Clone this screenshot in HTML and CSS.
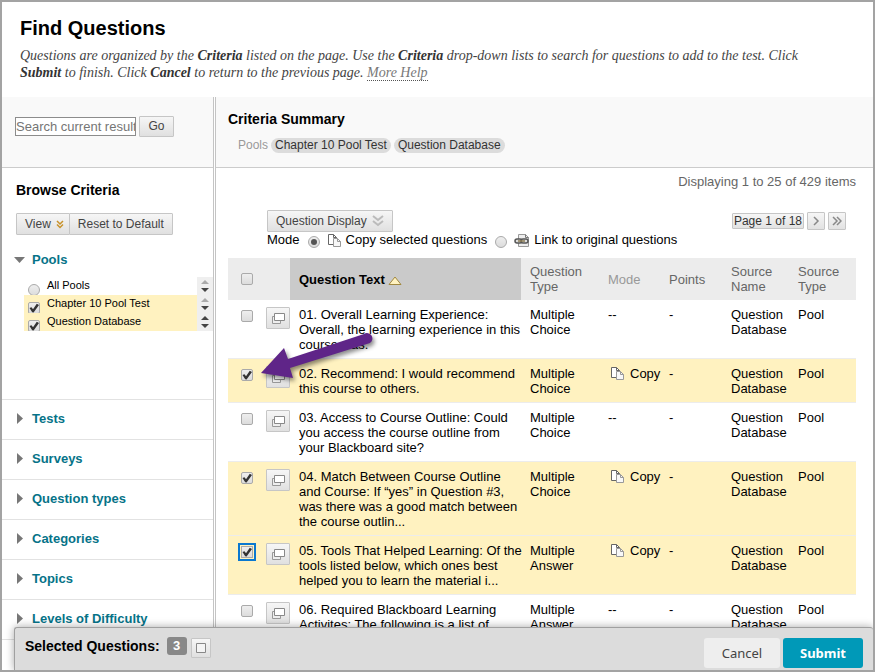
FILE: index.html
```html
<!DOCTYPE html>
<html lang="en">
<head>
<meta charset="utf-8">
<title>Find Questions</title>
<link rel="stylesheet" href="styles.css">
</head>
<body>
<svg class="defs" aria-hidden="true">
  <defs>
    <symbol id="copy" viewBox="0 0 15 15">
      <path d="M1.500 1.500h5l3 3v7h-8z" fill="#fff" stroke="#666"/>
      <path d="M6.500 1.500v3h3" fill="none" stroke="#666"/>
      <path d="M6.500 5.500h4l3 3v5h-7z" fill="#f8f8f8" stroke="#999"/>
      <path d="M10.500 5.500v3h3" fill="none" stroke="#999"/>
    </symbol>
    <symbol id="windows" viewBox="0 0 14 12">
      <path d="M1.500 4.500h8v7h-8z" fill="#eee" stroke="#999"/>
      <path d="M3.500 1.500h10v7h-10z" fill="#fff" stroke="#888"/>
    </symbol>
    <symbol id="sort" viewBox="0 0 8 12">
      <path d="M0 4l4-4 4 4z" fill="currentColor"/>
      <path d="M0 8h8l-4 4z" fill="#444"/>
    </symbol>
  </defs>
</svg>
<div class="page">
  <header class="intro">
    <h1>Find Questions</h1>
    <p>Questions are organized by the <b>Criteria</b> listed on the page. Use the <b>Criteria</b> drop-down lists to search for questions to add to the test. Click <b>Submit</b> to finish. Click <b>Cancel</b> to return to the previous page. <a href="#">More Help</a></p>
  </header>
  <div class="columns">
    <aside class="sidebar">
      <form class="strip search">
        <input type="text" aria-label="Search current results" placeholder="Search current result">
        <button type="button" class="btn">Go</button>
      </form>
      <section class="browse">
        <h2>Browse Criteria</h2>
        <div class="btn-group">
          <button type="button" class="btn menu">View <svg width="8" height="9" viewBox="0 0 8 9"><path d="M1 1l3 3 3-3M1 4.500l3 3 3-3" fill="none" stroke="#c8922a" stroke-width="1.500"/></svg></button><button type="button" class="btn">Reset to Default</button>
        </div>
        <h3 class="open"><a href="#">Pools</a></h3>
        <ul class="pools">
          <li><input type="radio" id="p0"><label for="p0">All Pools</label><span class="sorter dim"><svg width="8" height="12"><use href="#sort"/></svg></span></li>
          <li class="picked"><input type="checkbox" id="p1" checked><label for="p1">Chapter 10 Pool Test</label><span class="sorter dim"><svg width="8" height="12"><use href="#sort"/></svg></span></li>
          <li class="picked"><input type="checkbox" id="p2" checked><label for="p2">Question Database</label><span class="sorter"><svg width="8" height="12"><use href="#sort"/></svg></span></li>
        </ul>
      </section>
      <nav class="criteria">
        <a href="#">Tests</a>
        <a href="#">Surveys</a>
        <a href="#">Question types</a>
        <a href="#">Categories</a>
        <a href="#">Topics</a>
        <a href="#">Levels of Difficulty</a>
        <span></span>
      </nav>
    </aside>
    <main>
      <section class="strip summary">
        <h2>Criteria Summary</h2>
        <div class="tags"><span>Pools</span><span class="tag">Chapter 10 Pool Test</span><span class="tag">Question Database</span></div>
      </section>
      <section class="results">
        <p class="count">Displaying 1 to 25 of 429 items</p>
        <div class="tools">
          <button type="button" class="btn">Question Display <svg width="12" height="12" viewBox="0 0 12 12"><path d="M1 1l5 4 5-4M1 6l5 4 5-4" fill="none" stroke="#bbb" stroke-width="2"/></svg></button>
          <div class="pager">
            <button type="button" class="page-of">Page 1 of 18</button>
            <button type="button" class="step" aria-label="Next page"><svg width="10" height="10" viewBox="0 0 10 10"><path d="M3 1l4 4-4 4" fill="none" stroke="#888" stroke-width="1.500"/></svg></button>
            <button type="button" class="step" aria-label="Last page"><svg width="10" height="10" viewBox="0 0 10 10"><path d="M1 1l4 4-4 4M5 1l4 4-4 4" fill="none" stroke="#888" stroke-width="1.500"/></svg></button>
          </div>
        </div>
        <div class="mode">
          <span>Mode</span>
          <input type="radio" name="mode" id="m1" checked>
          <label for="m1"><svg width="15" height="15"><use href="#copy"/></svg>Copy selected questions</label>
          <input type="radio" name="mode" id="m2">
          <label for="m2"><svg width="16" height="15" viewBox="0 0 16 15"><path d="M4.500 1.500h7l3 3v9h-10z" fill="#eee" stroke="#999"/><path d="M11.500 1.500v3h3" fill="none" stroke="#777"/><rect x="1" y="6" width="7" height="4" rx="2" fill="#ddd" stroke="#555" stroke-width="1.500"/><rect x="7" y="6" width="7" height="4" rx="2" fill="#ddd" stroke="#555" stroke-width="1.500"/><path d="M4 8h7" stroke="#8a7a50" stroke-width="1.500"/></svg>Link to original questions</label>
        </div>
        <div class="list">
        <table>
          <colgroup><col class="c-check"><col class="c-view"><col><col class="c-type"><col class="c-mode"><col class="c-points"><col class="c-source"><col class="c-source"></colgroup>
          <thead>
            <tr><th class="check"><input type="checkbox" aria-label="Select all"></th><th></th><th class="sorted">Question Text <svg width="14" height="9" viewBox="0 0 14 9"><path d="M1 8.500L7 1l6 7.500z" fill="#fff2c0" stroke="#a08840"/></svg></th><th>Question Type</th><th class="faint">Mode</th><th>Points</th><th>Source Name</th><th>Source Type</th></tr>
          </thead>
          <tbody>
            <tr><td class="check"><input type="checkbox" aria-label="Question 01"></td><td class="view"><button type="button" class="btn" aria-label="Preview"><svg width="14" height="12"><use href="#windows"/></svg></button></td><td><div class="question">01. Overall Learning Experience: Overall, the learning experience in this course was.</div></td><td>Multiple Choice</td><td>--</td><td>-</td><td>Question Database</td><td>Pool</td></tr>
            <tr class="picked"><td class="check"><input type="checkbox" aria-label="Question 02" checked></td><td class="view"><button type="button" class="btn" aria-label="Preview"><svg width="14" height="12"><use href="#windows"/></svg></button></td><td><div class="question">02. Recommend: I would recommend this course to others.</div></td><td>Multiple Choice</td><td><span class="copy"><svg width="15" height="15"><use href="#copy"/></svg>Copy</span></td><td>-</td><td>Question Database</td><td>Pool</td></tr>
            <tr><td class="check"><input type="checkbox" aria-label="Question 03"></td><td class="view"><button type="button" class="btn" aria-label="Preview"><svg width="14" height="12"><use href="#windows"/></svg></button></td><td><div class="question">03. Access to Course Outline: Could you access the course outline from your Blackboard site?</div></td><td>Multiple Choice</td><td>--</td><td>-</td><td>Question Database</td><td>Pool</td></tr>
            <tr class="picked"><td class="check"><input type="checkbox" aria-label="Question 04" checked></td><td class="view"><button type="button" class="btn" aria-label="Preview"><svg width="14" height="12"><use href="#windows"/></svg></button></td><td><div class="question">04. Match Between Course Outline and Course: If “yes” in Question #3, was there was a good match between the course outlin...</div></td><td>Multiple Choice</td><td><span class="copy"><svg width="15" height="15"><use href="#copy"/></svg>Copy</span></td><td>-</td><td>Question Database</td><td>Pool</td></tr>
            <tr class="picked"><td class="check"><input type="checkbox" class="focused" aria-label="Question 05" checked></td><td class="view"><button type="button" class="btn" aria-label="Preview"><svg width="14" height="12"><use href="#windows"/></svg></button></td><td><div class="question">05. Tools That Helped Learning: Of the tools listed below, which ones best helped you to learn the material i...</div></td><td>Multiple Answer</td><td><span class="copy"><svg width="15" height="15"><use href="#copy"/></svg>Copy</span></td><td>-</td><td>Question Database</td><td>Pool</td></tr>
            <tr><td class="check"><input type="checkbox" aria-label="Question 06"></td><td class="view"><button type="button" class="btn" aria-label="Preview"><svg width="14" height="12"><use href="#windows"/></svg></button></td><td><div class="question">06. Required Blackboard Learning Activites: The following is a list of</div></td><td>Multiple Answer</td><td>--</td><td>-</td><td>Question Database</td><td>Pool</td></tr>
          </tbody>
        </table>
        <svg class="arrow" width="124" height="60" viewBox="0 0 124 60" aria-hidden="true"><path d="M3 45L26 20l4 11L106 6a5 5 0 0 1 6 9L32 40l3 10z" fill="#5f2588"/></svg>
        </div>
      </section>
    </main>
  </div>
  <footer class="bar">
    <strong>Selected Questions:</strong>
    <span class="badge">3</span>
    <button type="button" class="btn show" aria-label="Show selected"><svg width="10" height="10" viewBox="0 0 10 10"><path d="M.5.5h9v9h-9z" fill="#f4f4f4" stroke="#888"/></svg></button>
    <span class="actions"><button type="button" class="cancel">Cancel</button><button type="submit" class="submit">Submit</button></span>
  </footer>
</div>
</body>
</html>
```
FILE: styles.css
```css
* { box-sizing: border-box; }
body {
  margin: 0;
  font: 13px/15px "Liberation Sans", Arial, sans-serif;
  color: #000;
  background: #fff;
}
h1, h2, h3, p, ul { margin: 0; padding: 0; }
button, input { font: inherit; margin: 0; }
svg { flex: none; }
.defs { position: absolute; width: 0; height: 0; }
.page {
  position: relative;
  display: flex;
  flex-direction: column;
  height: 100vh;
  border: 2px solid #a3a3a3;
  overflow: hidden;
}

.intro { padding: 14px 44px 16px 18px; }
.intro h1 { font-size: 20px; line-height: 24px; margin-bottom: 7px; }
.intro p {
  font: italic 14px/17px "Liberation Serif", serif;
  color: #444;
}
.intro b { color: #333; }
.intro a { color: #777; text-decoration: none; border-bottom: 1px dotted #555; }

.columns {
  flex: 1;
  display: grid;
  grid-template-columns: 214px 1fr;
}
.sidebar { border-right: 3px double #c4c4c4; }
.strip { height: 71px; background: #f9f9f9; border-bottom: 1px solid #ccc; }
h2 { font-size: 14px; line-height: 16px; }

.btn {
  display: inline-flex;
  align-items: center;
  justify-content: center;
  gap: 5px;
  height: 22px;
  padding: 0 8px;
  border: 1px solid #c6c6c6;
  border-radius: 1px;
  background: linear-gradient(#f6f6f6, #e0e0e0);
  color: #444;
  font-size: 12px;
}
.search { display: flex; align-items: flex-start; gap: 3px; padding: 19px 0 0 13px; }
.search input {
  width: 121px;
  height: 19px;
  margin-top: 1px;
  padding: 0;
  border: 1px solid #8c8c8c;
  background: #fff;
}
.search input::placeholder { color: #757575; }
.search .btn { width: 35px; height: 21px; font-size: 12px; }

.browse { height: 231px; padding-top: 14px; }
.browse h2 { margin-left: 14px; }
.btn-group { display: flex; margin: 15px 0 0 14px; }
.btn-group .btn + .btn { margin-left: -1px; }
.btn-group .menu { padding-right: 5px; }
h3 { font-size: 13px; line-height: 16px; }
.open { display: flex; align-items: center; gap: 7px; margin: 17px 0 9px 12px; }
.open::before {
  content: "";
  width: 11px;
  height: 6px;
  background: #777;
  clip-path: polygon(0 0, 100% 0, 50% 100%);
}
.open a, .criteria a { color: #067388; text-decoration: none; }
.pools { list-style: none; margin-left: 22px; font-size: 11px; }
.pools li { display: flex; height: 18px; padding-left: 4px; overflow: hidden; }
.pools .picked { background: #fff2c0; }
.pools input { margin: 7px 7px 0 0; }
.pools label { flex: 1; line-height: 17px; }
.sorter { width: 16px; padding: 3px 4px; background: #efefef; line-height: 0; color: #444; }
.sorter.dim { color: #aaa; }

.criteria a, .criteria span {
  display: flex;
  align-items: center;
  gap: 9px;
  height: 40px;
  padding: 0 0 2px 15px;
  border-top: 1px solid #e2e2e2;
  font-weight: bold;
}
.criteria a::before {
  content: "";
  width: 6px;
  height: 11px;
  background: #777;
  clip-path: polygon(0 0, 100% 50%, 0 100%);
}

input[type="checkbox"], input[type="radio"] {
  appearance: none;
  flex: none;
  display: block;
  width: 12px;
  height: 12px;
  border: 1px solid #aaa;
  border-radius: 2px;
  background: linear-gradient(#eee, #dcdcdc);
}
input[type="radio"] { border-radius: 50%; }
input[type="checkbox"]:checked::before {
  content: "";
  display: block;
  width: 10px;
  height: 10px;
  background: #333;
  clip-path: polygon(5% 50%, 25% 42%, 40% 62%, 78% 8%, 100% 20%, 46% 95%, 32% 92%);
}
input[type="radio"]:checked::before {
  content: "";
  display: block;
  width: 6px;
  height: 6px;
  margin: 2px;
  border-radius: 50%;
  background: #555;
}
input[type="checkbox"].focused {
  border-radius: 0;
  outline: 2px solid #0a78d0;
  outline-offset: 1px;
}

.summary { padding: 14px 12px 0; }
.tags { display: flex; gap: 3px; margin: 11px 0 0 10px; font-size: 12px; line-height: 15px; color: #999; }
.tag { padding: 0 4px; border-radius: 8px; background: #dcdcdc; color: #333; }

.results { padding: 6px 17px 0 12px; }
.count { text-align: right; color: #666; }
.tools { display: flex; justify-content: space-between; margin: 21px 10px 0 39px; }
.pager { display: flex; align-items: center; gap: 3px; }
.page-of, .step {
  padding: 0;
  height: 18px;
  border: 1px solid #c6c6c6;
  border-radius: 1px;
  background: linear-gradient(#f6f6f6, #e2e2e2);
  color: #333;
}
.page-of { height: 16px; font-size: 12px; line-height: 14px; padding: 0 1px; }
.step { display: flex; align-items: center; justify-content: center; width: 18px; }
.mode { display: flex; margin-left: 39px; line-height: 16px; }
.mode input { margin: 4px 7px 0 8px; }
.mode label { display: flex; gap: 4px; }
.mode svg { margin-top: 1px; }

.list { position: relative; margin-top: 10px; }
table { width: 100%; table-layout: fixed; border-spacing: 0; }
.c-check { width: 38px; }
.c-view { width: 24px; }
.c-type { width: 78px; }
.c-mode { width: 61px; }
.c-points { width: 62px; }
.c-source { width: 67px; }
th {
  height: 42px;
  padding: 0 0 0 9px;
  background: #ececec;
  color: #666;
  font-weight: normal;
  text-align: left;
}
th.sorted { background: #cacaca; color: #000; font-weight: bold; }
.sorted svg { vertical-align: -1px; }
th.faint { color: #999; }
td { padding: 7px 0 6px 9px; border-bottom: 1px solid #ececec; vertical-align: top; }
tr.picked td { background: #fff2c0; }
.check { padding-left: 13px; }
td.check { padding-top: 10px; }
td.view { padding: 7px 0 0; }
.view .btn { width: 24px; padding: 0; }
.question { margin-right: -4px; }
.copy { display: flex; gap: 5px; padding-left: 2px; }
.arrow {
  position: absolute;
  left: 30px;
  top: 70px;
  filter: drop-shadow(2px 3px 2px rgba(0, 0, 0, .45));
}

.bar {
  position: absolute;
  left: 12px;
  right: 0;
  bottom: 0;
  display: flex;
  align-items: flex-start;
  height: 43px;
  padding: 9px 10px 0;
  border: 1px solid #a0a0a0;
  border-width: 1px 0 0 1px;
  border-radius: 3px 3px 0 0;
  background: #dcdcdc;
  box-shadow: 0 0 8px rgba(0, 0, 0, .35);
}
.bar strong { font-size: 14px; line-height: 18px; }
.badge {
  width: 20px;
  margin-left: 7px;
  border-radius: 3px;
  background: #888;
  color: #fff;
  font-weight: bold;
  line-height: 18px;
  text-align: center;
}
.bar .show { width: 20px; height: 20px; margin: 1px 0 0 4px; padding: 0; }
.actions { display: flex; gap: 3px; margin: 1px 0 0 auto; }
.actions button {
  height: 30px;
  border: 0;
  border-radius: 3px;
  font: 13px/18px "Noto Sans", sans-serif;
}
.actions .cancel { width: 76px; background: #eee; color: #444; }
.actions .submit { width: 80px; background: #0099b8; color: #fff; font-weight: bold; }
```
